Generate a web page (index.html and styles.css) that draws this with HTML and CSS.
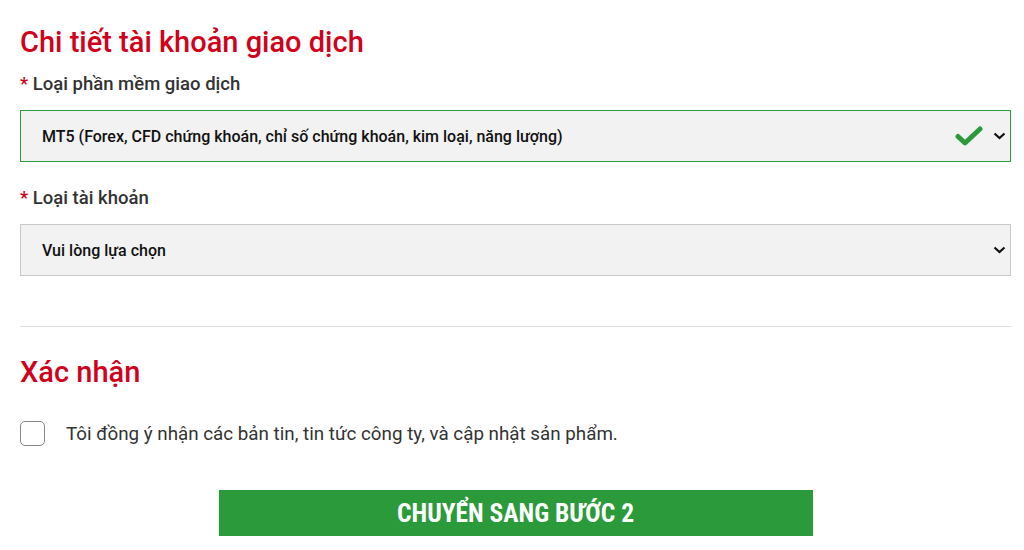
FILE: index.html
```html
<!DOCTYPE html>
<html lang="vi">
<head>
<meta charset="utf-8">
<link rel="stylesheet" href="styles.css">
</head>
<body>
<form class="form">
  <h2 class="title">Chi tiết tài khoản giao dịch</h2>
  <div class="field">
    <label class="label"><span class="req">*</span> Loại phần mềm giao dịch</label>
    <div class="select valid">
      <span class="value">MT5 (Forex, CFD chứng khoán, chỉ số chứng khoán, kim loại, năng lượng)</span>
      <svg class="check" width="28" height="20" viewBox="0 0 28 20"><path d="M3 10.5 L10 17 L25 3" fill="none" stroke="#2a9a3a" stroke-width="5" stroke-linecap="round" stroke-linejoin="round"/></svg>
      <svg class="chev" width="13" height="8" viewBox="0 0 13 8"><path d="M1.5 1.5 L6.5 6 L11.5 1.5" fill="none" stroke="#111" stroke-width="2.2"/></svg>
    </div>
  </div>
  <div class="field">
    <label class="label"><span class="req">*</span> Loại tài khoản</label>
    <div class="select">
      <span class="value">Vui lòng lựa chọn</span>
      <svg class="chev" width="13" height="8" viewBox="0 0 13 8"><path d="M1.5 1.5 L6.5 6 L11.5 1.5" fill="none" stroke="#111" stroke-width="2.2"/></svg>
    </div>
  </div>
  <hr class="divider">
  <h2 class="title title2">Xác nhận</h2>
  <label class="agree">
    <span class="box"></span>
    <span class="agree-text">Tôi đồng ý nhận các bản tin, tin tức công ty, và cập nhật sản phẩm.</span>
  </label>
  <div class="actions">
    <button type="button" class="btn">CHUYỂN SANG BƯỚC 2</button>
  </div>
</form>
</body>
</html>
```

FILE: styles.css
```css
html, body {
  margin: 0;
  padding: 0;
  background: #fff;
}
body {
  font-family: Roboto, "Liberation Sans", sans-serif;
  color: #333;
}
.form {
  width: 991px;
  padding: 0 0 0 20px;
}
.title {
  margin: 0;
  padding-top: 24px;
  font-size: 29px;
  line-height: 36px;
  font-weight: 500;
  color: #d0021b;
}
.field {
  margin-top: 12px;
}
.field + .field {
  margin-top: 24px;
}
.label {
  display: block;
  font-size: 18.5px;
  line-height: 24px;
  font-weight: 500;
  color: #333;
  margin-bottom: 14px;
}
.req {
  color: #d0021b;
}
.select {
  height: 50px;
  border: 1px solid #c8c8c8;
  background: #f2f2f2;
  display: flex;
  align-items: center;
  padding: 0 4px 0 21px;
}
.select.valid {
  border-color: #2a9a3a;
}
.value {
  flex: 1;
  font-size: 16px;
  font-weight: 500;
  color: #111;
}
.check {
  margin-right: 10px;
}
.divider {
  border: 0;
  border-top: 1px solid #ddd;
  margin: 50px 0 0 0;
}
.title2 {
  padding-top: 27px;
}
.agree {
  display: flex;
  align-items: center;
  margin-top: 31px;
}
.box {
  width: 23px;
  height: 23px;
  border: 1px solid #888;
  border-radius: 5px;
  flex: none;
}
.agree-text {
  margin-left: 21px;
  font-size: 18.8px;
  color: #333;
}
.actions {
  display: flex;
  justify-content: center;
  margin-top: 44px;
}
.btn {
  width: 594px;
  height: 46px;
  border: 0;
  background: #2a9a3a;
  color: #fff;
  font-family: Roboto, "Liberation Sans", sans-serif;
  font-weight: 700;
  font-size: 25.5px;
  font-stretch: condensed;
}
```
